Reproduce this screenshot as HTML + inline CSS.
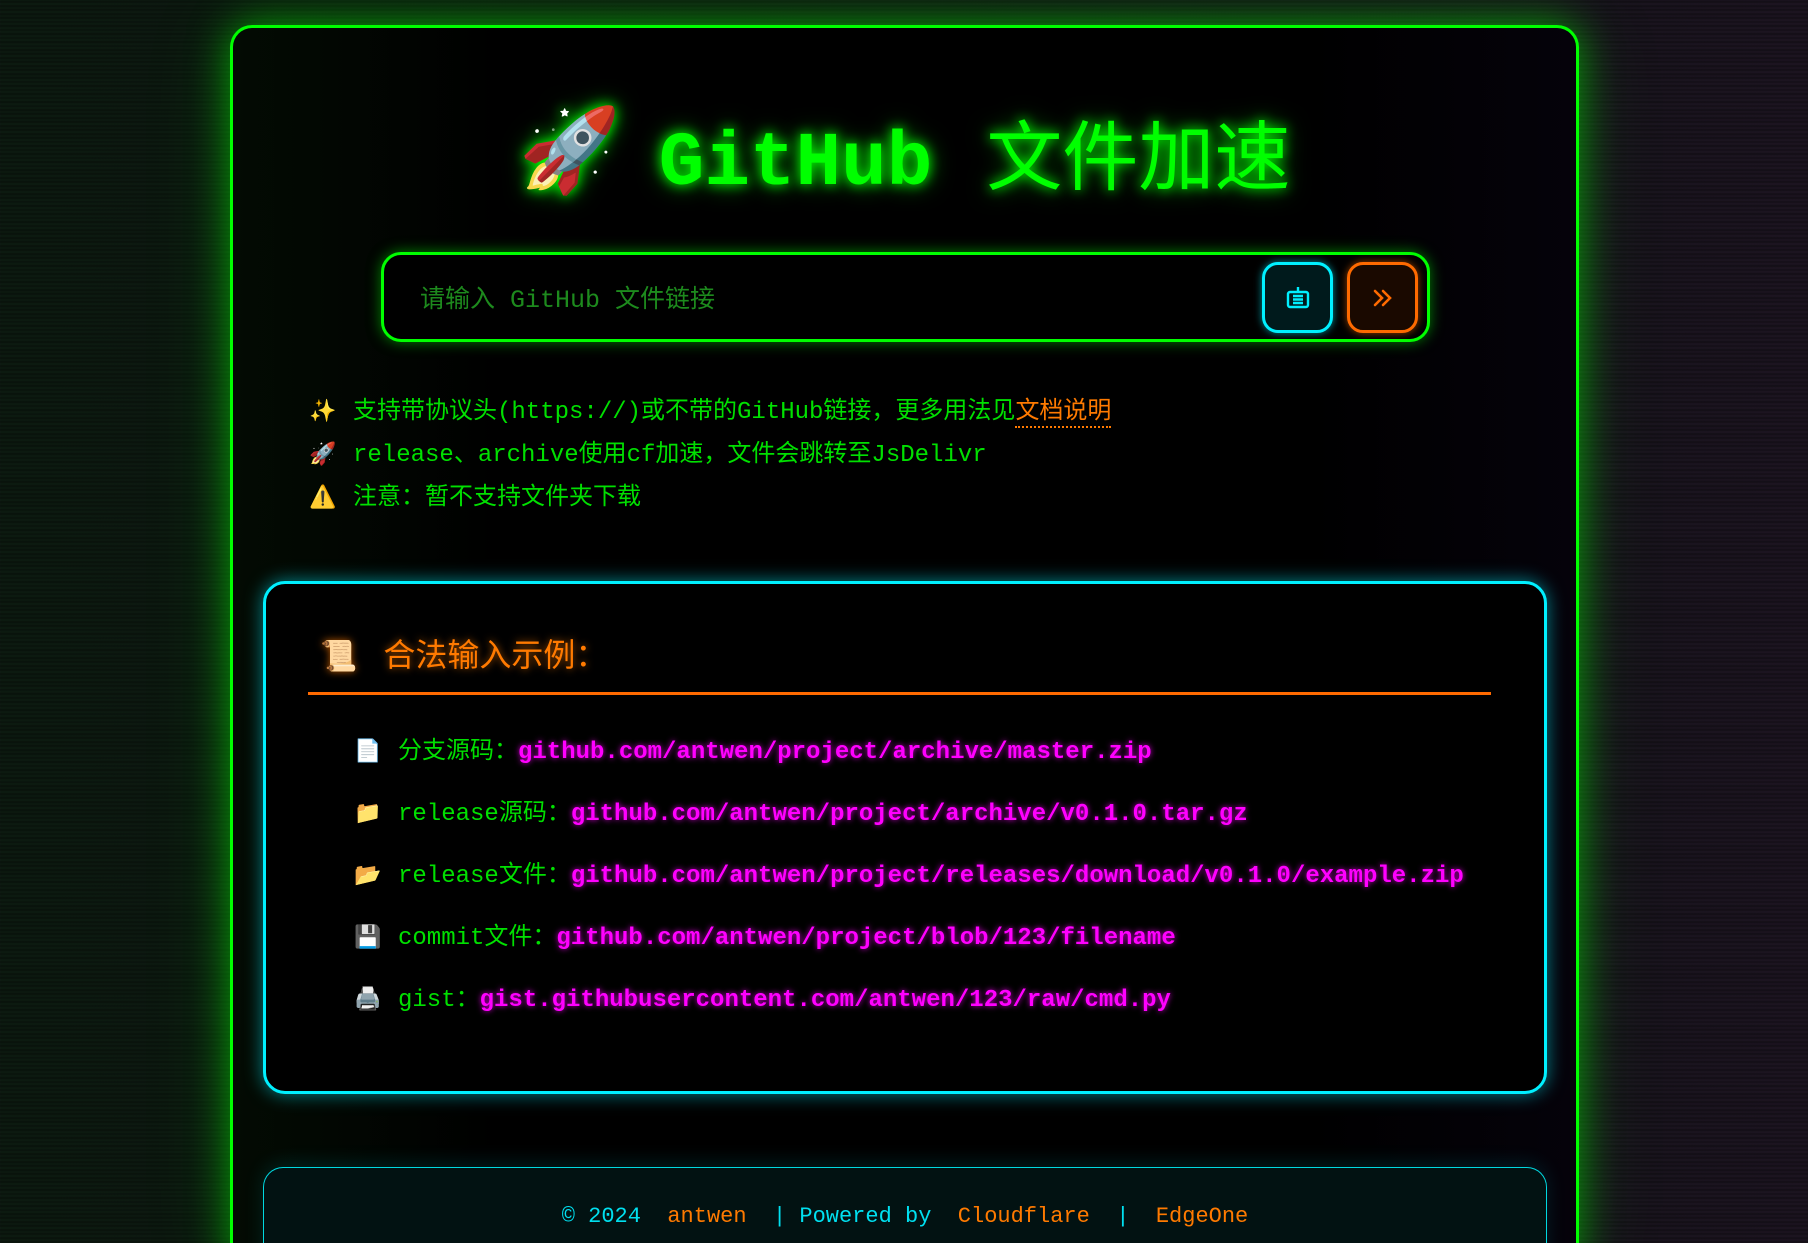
<!DOCTYPE html>
<html><head><meta charset="utf-8">
<style>
*{margin:0;padding:0;box-sizing:border-box}
html,body{width:1808px;height:1243px;overflow:hidden}
body{background:#0d1212;font-family:"Liberation Mono","Noto Sans CJK SC",monospace;position:relative;
background-image:repeating-linear-gradient(0deg,rgba(0,0,0,.25) 0 2px,rgba(0,0,0,0) 2px 4px),linear-gradient(90deg,#0c1a10 0%,#101613 40%,#15131a 70%,#1c1420 100%);}
.card{position:absolute;left:230px;top:25px;width:1349px;height:1240px;border:3px solid #00ff00;border-bottom:none;border-radius:22px 22px 0 0;
background:linear-gradient(90deg,#030b03,#000 20%,#000 80%,#05020a);box-shadow:0 0 40px rgba(0,255,0,.55),0 0 90px rgba(0,255,0,.15)}
.title{position:absolute;left:0;right:0;top:68px;text-align:center;font-size:76px;color:#00ff00;text-shadow:0 0 12px #00ff00,0 0 24px rgba(0,255,0,.6);white-space:nowrap}
.title b{font-family:"Liberation Mono",monospace;font-weight:bold}
.title .rk{font-size:82px;margin-right:38px;vertical-align:6px}
.title .cn{font-family:"Noto Sans CJK SC",sans-serif;font-weight:400;margin-left:54px}
.inp{position:absolute;left:148px;top:224px;width:1049px;height:90px;border:3px solid #00ff00;border-radius:20px;background:#000;box-shadow:0 0 14px rgba(0,255,0,.5)}
.ph{position:absolute;left:36px;top:24px;font-size:25px;color:#1d8a1d}
.btn{position:absolute;top:7px;width:71px;height:71px;border:3px solid;border-radius:16px}
.b1{left:878px;border-color:#00f0ff;background:#001a1c;box-shadow:0 0 8px rgba(0,240,255,.6)}
.b2{left:963px;border-color:#ff6a00;background:#1a0900;box-shadow:0 0 8px rgba(255,106,0,.6)}
.btn svg{position:absolute;left:50%;top:50%;transform:translate(-50%,-50%)}
.tips{position:absolute;left:76px;top:363px;font-size:24px;color:#00e000;line-height:43px}
.tips span.i{display:inline-block;width:44px;font-size:22px}
.tips a{color:#ff7a00;border-bottom:2px dotted #ff7a00;text-decoration:none}
.ex{position:absolute;left:30px;top:553px;width:1284px;height:513px;border:3px solid #00f0ff;border-radius:22px;background:#000;box-shadow:0 0 18px rgba(0,240,255,.55)}
.ex h2{position:absolute;left:54px;top:46px;font-size:32px;font-weight:400;color:#ff7a00;font-family:"Noto Sans CJK SC",sans-serif;text-shadow:0 0 8px rgba(255,122,0,.7)}
.ex h2 span{margin-right:26px;font-size:30px}
.ex .line{position:absolute;left:42px;top:108px;width:1183px;height:3px;background:#ff6a00}
.row{position:absolute;left:88px;font-size:24px;color:#00e000;white-space:nowrap}
.row .i{display:inline-block;width:44px;font-size:22px}
.row b{color:#ff00ff;text-shadow:0 0 6px rgba(255,0,255,.8)}
.foot{position:absolute;left:30px;top:1139px;width:1284px;height:200px;border:1px solid #00d8e0;border-bottom:none;border-radius:20px 20px 0 0;background:#021212;box-shadow:0 -4px 20px rgba(0,240,255,.12)}
.ft{position:absolute;left:0;right:0;top:36px;text-align:center;font-size:22px;color:#00e0f0;white-space:pre}
.ft .o{color:#ff7a00}
</style></head><body>
<div class="card">
 <div class="title"><span class="rk">🚀</span><b>GitHub</b><span class="cn">文件加速</span></div>
 <div class="inp">
  <div class="ph">请输入 GitHub 文件链接</div>
  <div class="btn b1"><svg width="28" height="28" viewBox="0 0 28 28" fill="none" stroke="#00f0ff" stroke-width="2.4"><rect x="4" y="8" width="20" height="15" rx="2"/><path d="M14 3v5M9 12h10M9 15.5h10M9 19h10"/></svg></div>
  <div class="btn b2"><svg width="28" height="28" viewBox="0 0 28 28" fill="none" stroke="#ff6a00" stroke-width="2.6" stroke-linecap="round"><path d="M6 7l7 7-7 7M14 7l7 7-7 7"/></svg></div>
 </div>
 <div class="tips">
  <div><span class="i">✨</span>支持带协议头(https://)或不带的GitHub链接，更多用法见<a>文档说明</a></div>
  <div><span class="i">🚀</span>release、archive使用cf加速，文件会跳转至JsDelivr</div>
  <div><span class="i">⚠️</span>注意：暂不支持文件夹下载</div>
 </div>
 <div class="ex">
  <h2><span>📜</span>合法输入示例：</h2>
  <div class="line"></div>
  <div class="row" style="top:146px"><span class="i">📄</span>分支源码：<b>github.com/antwen/project/archive/master.zip</b></div>
  <div class="row" style="top:208px"><span class="i">📁</span>release源码：<b>github.com/antwen/project/archive/v0.1.0.tar.gz</b></div>
  <div class="row" style="top:270px"><span class="i">📂</span>release文件：<b>github.com/antwen/project/releases/download/v0.1.0/example.zip</b></div>
  <div class="row" style="top:332px"><span class="i">💾</span>commit文件：<b>github.com/antwen/project/blob/123/filename</b></div>
  <div class="row" style="top:394px"><span class="i">🖨️</span>gist：<b>gist.githubusercontent.com/antwen/123/raw/cmd.py</b></div>
 </div>
 <div class="foot"><div class="ft">© 2024  <span class="o">antwen</span>  | Powered by  <span class="o">Cloudflare</span>  |  <span class="o">EdgeOne</span></div></div>
</div>
</body></html>
